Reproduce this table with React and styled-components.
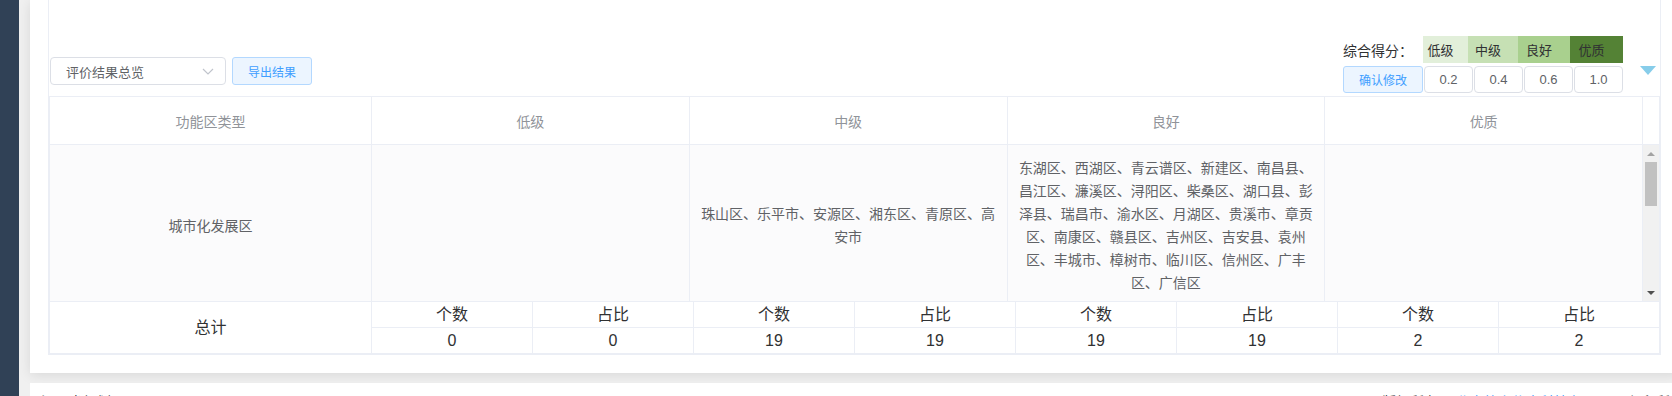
import React from "react";
import styled, { createGlobalStyle } from "styled-components";

const levels = [
  { name: "低级", color: "#e2efda", width: 45, value: "0.2" },
  { name: "中级", color: "#c6e0b4", width: 50, value: "0.4" },
  { name: "良好", color: "#a9d08e", width: 52, value: "0.6" },
  { name: "优质", color: "#548235", width: 53, value: "1.0" },
];

const rows = [
  {
    type: "城市化发展区",
    cells: [
      "",
      "珠山区、乐平市、安源区、湘东区、青原区、高安市",
      "东湖区、西湖区、青云谱区、新建区、南昌县、昌江区、濂溪区、浔阳区、柴桑区、湖口县、彭泽县、瑞昌市、渝水区、月湖区、贵溪市、章贡区、南康区、赣县区、吉州区、吉安县、袁州区、丰城市、樟树市、临川区、信州区、广丰区、广信区",
      "",
    ],
  },
  {
    type: "农产品主产区",
    cells: ["", "浮梁县、莲花县、上栗县、芦溪县、武宁县、修水县", "进贤县、安义县、永修县、德安县", "余干县、鄱阳县"],
  },
  {
    type: "重点生态功能区",
    cells: ["", "井冈山市、婺源县、铜鼓县", "靖安县、宜丰县、奉新县", ""],
  },
];

const totals = [
  { count: 0, ratio: 0 },
  { count: 19, ratio: 19 },
  { count: 19, ratio: 19 },
  { count: 2, ratio: 2 },
];

const App = () => {
  return (
    <Page>
      <GlobalStyle />
      <Sidebar />
      <Main>
        <Card>
          <Panel>
            <Toolbar>
              <LeftTools>
                <SelectBox>
                  <span>评价结果总览</span>
                  <svg width="12" height="7" viewBox="0 0 12 7">
                    <path d="M1 1 L6 6 L11 1" fill="none" stroke="#c0c4cc" strokeWidth="1.2" />
                  </svg>
                </SelectBox>
                <PlainButton>导出结果</PlainButton>
              </LeftTools>

              <RightTools>
                <ScoreBox>
                  <ScoreRow>
                    <ScoreLabel>综合得分：</ScoreLabel>
                    {levels.map((l) => (
                      <LevelTag key={l.name} $bg={l.color} $w={l.width}>
                        {l.name}
                      </LevelTag>
                    ))}
                  </ScoreRow>
                  <ScoreRow>
                    <PlainButton $w={80}>确认修改</PlainButton>
                    {levels.map((l) => (
                      <ScoreInput key={l.name} value={l.value} readOnly />
                    ))}
                  </ScoreRow>
                </ScoreBox>
                <Caret />
              </RightTools>
            </Toolbar>

            <Table>
              <HeadRow>
                <HeadCell>功能区类型</HeadCell>
                {levels.map((l) => (
                  <HeadCell key={l.name}>{l.name}</HeadCell>
                ))}
                <HeadCell />
              </HeadRow>

              <Body>
                <BodyRows>
                  {rows.map((r) => (
                    <BodyRow key={r.type}>
                      <BodyCell>{r.type}</BodyCell>
                      {r.cells.map((c, i) => (
                        <BodyCell key={i}>{c}</BodyCell>
                      ))}
                    </BodyRow>
                  ))}
                </BodyRows>
                <Scrollbar>
                  <ScrollBtn>
                    <Arrow $up />
                  </ScrollBtn>
                  <Track>
                    <Thumb />
                  </Track>
                  <ScrollBtn>
                    <Arrow />
                  </ScrollBtn>
                </Scrollbar>
              </Body>

              <TotalGrid>
                <TotalCell $span>总计</TotalCell>
                {totals.map((t, i) => (
                  <React.Fragment key={i}>
                    <TotalCell>个数</TotalCell>
                    <TotalCell>占比</TotalCell>
                  </React.Fragment>
                ))}
                {totals.map((t, i) => (
                  <React.Fragment key={i}>
                    <TotalCell>{t.count}</TotalCell>
                    <TotalCell>{t.ratio}</TotalCell>
                  </React.Fragment>
                ))}
              </TotalGrid>
            </Table>
          </Panel>
        </Card>

        <Footer>
          <span>江西省规划局</span>
          <Copyright>
            版权所有 © <FooterLink>北京第六信息科技有限公司</FooterLink> 保留所有权利
          </Copyright>
        </Footer>
      </Main>
    </Page>
  );
};

export default App;

const GlobalStyle = createGlobalStyle`
  html, body {
    margin: 0;
    padding: 0;
    overflow: hidden;
    background: #f0f0f0;
  }
  body {
    font-family: "Liberation Sans", "Noto Sans CJK SC", sans-serif;
  }
  *, *::before, *::after {
    box-sizing: border-box;
  }
`;

const Page = styled.div`
  display: flex;
  width: 1723px;
  min-height: 396px;
`;

const Sidebar = styled.aside`
  width: 19px;
  flex-shrink: 0;
  background: #304156;
`;

const Main = styled.main`
  flex: 1;
  display: flex;
  flex-direction: column;
  background: #f0f0f0;
  padding-left: 11px;
`;

const Card = styled.section`
  width: 1649px;
  background: #fff;
  padding: 0 18px 18px;
  box-shadow: 0 2px 12px 0 rgba(0, 0, 0, 0.1);
  margin-bottom: 10px;
`;

const Panel = styled.div`
  border: 1px solid #ebeef5;
  border-top: none;
`;

const Toolbar = styled.div`
  display: flex;
  justify-content: space-between;
  align-items: flex-end;
  padding: 36px 4px 3px 1px;
`;

const LeftTools = styled.div`
  display: flex;
  gap: 6px;
  margin-bottom: 8px;
`;

const SelectBox = styled.div`
  width: 176px;
  height: 28px;
  border: 1px solid #dcdfe6;
  border-radius: 4px;
  padding: 0 11px 0 15px;
  display: flex;
  align-items: center;
  justify-content: space-between;
  font-size: 13px;
  color: #606266;
`;

const PlainButton = styled.button`
  width: ${(p) => (p.$w ? `${p.$w}px` : "auto")};
  height: ${(p) => (p.$w ? "27px" : "28px")};
  padding: 0 15px;
  border: 1px solid #b3d8ff;
  border-radius: 3px;
  background: #ecf5ff;
  color: #409eff;
  font-family: inherit;
  font-size: 12px;
  cursor: pointer;
`;

const RightTools = styled.div`
  display: flex;
  align-items: flex-start;
`;

const ScoreBox = styled.div`
  display: flex;
  flex-direction: column;
  gap: 3px;
`;

const ScoreRow = styled.div`
  display: flex;
  align-items: center;
  height: 27px;
`;

const ScoreLabel = styled.span`
  width: 80px;
  font-size: 14px;
  color: #303133;
`;

const LevelTag = styled.span`
  width: ${(p) => p.$w}px;
  height: 27px;
  background: ${(p) => p.$bg};
  display: flex;
  align-items: center;
  justify-content: center;
  padding-right: 10px;
  font-size: 13px;
  color: #303133;
`;

const ScoreInput = styled.input`
  width: 49px;
  height: 27px;
  margin-left: 1px;
  border: 1px solid #dcdfe6;
  border-radius: 4px;
  text-align: center;
  font-family: inherit;
  font-size: 13px;
  color: #606266;
  outline: none;
`;

const Caret = styled.span`
  margin: 30px 0 0 17px;
  width: 0;
  height: 0;
  border-left: 8px solid transparent;
  border-right: 8px solid transparent;
  border-top: 9px solid #87cdea;
`;

const Table = styled.div`
  border: 1px solid #ebeef5;
`;

const HeadRow = styled.div`
  display: grid;
  grid-template-columns: 321px repeat(4, 1fr) 16px;
  gap: 1px;
  background: #ebeef5;
  border-bottom: 1px solid #ebeef5;
  height: 48px;
`;

const HeadCell = styled.div`
  background: #fff;
  display: flex;
  align-items: center;
  justify-content: center;
  font-size: 14px;
  color: #909399;
`;

const Body = styled.div`
  display: flex;
  gap: 1px;
  height: 156px;
  background: #ebeef5;
`;

const BodyRows = styled.div`
  flex: 1;
  overflow: hidden;
  background: #fbfbfc;
`;

const BodyRow = styled.div`
  display: grid;
  grid-template-columns: 321px repeat(4, 1fr);
  gap: 1px;
  background: #ebeef5;
  border-bottom: 1px solid #ebeef5;
`;

const BodyCell = styled.div`
  background: #fbfbfc;
  display: flex;
  align-items: center;
  justify-content: center;
  text-align: center;
  padding: 12px 10px;
  font-size: 14px;
  line-height: 23px;
  color: #606266;
`;

const Scrollbar = styled.div`
  width: 16px;
  display: flex;
  flex-direction: column;
  background: #f1f1f1;
`;

const ScrollBtn = styled.div`
  height: 17px;
  display: flex;
  align-items: center;
  justify-content: center;
`;

const Arrow = styled.span`
  width: 0;
  height: 0;
  border-left: 4px solid transparent;
  border-right: 4px solid transparent;
  ${(p) =>
    p.$up ? "border-bottom: 4px solid #a3a3a3;" : "border-top: 4px solid #505050;"}
`;

const Track = styled.div`
  flex: 1;
`;

const Thumb = styled.div`
  height: 44px;
  margin: 0 2px;
  background: #c1c1c1;
`;

const TotalGrid = styled.div`
  display: grid;
  grid-template-columns: 321px repeat(8, 1fr);
  grid-template-rows: 25px 25px;
  gap: 1px;
  background: #ebeef5;
  border-top: 1px solid #ebeef5;
`;

const TotalCell = styled.div`
  background: #fff;
  display: flex;
  align-items: center;
  justify-content: center;
  font-size: 16px;
  line-height: 20px;
  color: #303133;
  ${(p) => (p.$span ? "grid-row: span 2;" : "")}
`;

const Footer = styled.footer`
  flex: 1;
  display: flex;
  background: #fff;
  padding: 9px 11px 0;
  font-size: 14px;
  line-height: 20px;
  color: #303133;
`;

const Copyright = styled.span`
  margin-left: auto;
`;

const FooterLink = styled.a`
  color: #409eff;
  text-decoration: none;
`;
